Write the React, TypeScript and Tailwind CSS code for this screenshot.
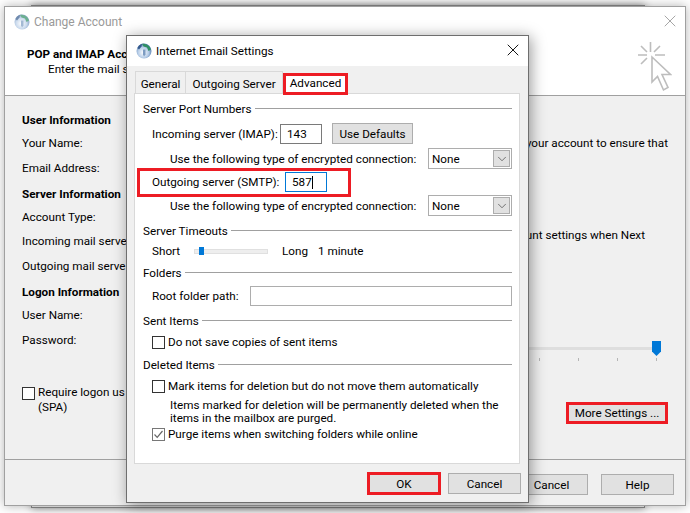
import { X, ChevronDown } from 'lucide-react';

function Globe({ className = '' }: { className?: string }) {
  return (
    <svg width="18" height="18" viewBox="0 0 18 18" className={className}>
      <defs>
        <radialGradient id="globe" cx="0.45" cy="0.6" r="0.6">
          <stop offset="0" stopColor="#ffffff" />
          <stop offset="0.6" stopColor="#b4cbe6" />
          <stop offset="1" stopColor="#4f78ad" />
        </radialGradient>
      </defs>
      <circle cx="9" cy="9" r="7.5" fill="url(#globe)" />
      <path d="M7 1.800C10.500 1 14.500 3 16 7.500L13.500 9 12 5.500 8.500 4.500z" fill="#2f9062" />
      <path d="M2.500 6C3.500 3.800 5 2.500 7 1.800L6.500 4.500 4 7.500z" fill="#35598c" />
      <path d="M8 7.500h2.500v5L9 14.500l-1-2z" fill="#7d9cc2" />
    </svg>
  );
}

function CursorMark() {
  return (
    <svg width="36" height="54" viewBox="0 0 36 54" fill="none" stroke="#bdbdbd" strokeWidth="1.6">
      <path d="M16 17V42L21.500 36.500L27.500 50L32 47.500L26 34.500H34.500Z" />
      <path d="M14.500 2V12M2 15H11M19 15H29M5 6L11 12M24 6L18 12M5 24L11 18" />
    </svg>
  );
}

function GroupHeader({ title, className }: { title: string; className: string }) {
  return (
    <div className={`flex h-4 items-center gap-[3px] ${className}`}>
      <span>{title}</span>
      <div className="mt-[-1px] h-px flex-1 bg-[#a0a0a0]" />
    </div>
  );
}

function NoneSelect() {
  return (
    <div className="ml-auto flex h-[21px] w-[84px] items-center justify-between border border-[#adadad] bg-white pl-[3px] pr-px">
      <span>None</span>
      <div className="flex h-[17px] w-[17px] items-center justify-center border border-[#adadad] bg-[#e1e1e1]">
        <ChevronDown size={14} strokeWidth={1.2} className="text-[#444]" />
      </div>
    </div>
  );
}

function Check({ checked, className = '' }: { checked?: boolean; className?: string }) {
  return (
    <div className={`flex h-[13px] w-[13px] shrink-0 items-center justify-center border border-[#333] bg-white ${className}`}>
      {checked && (
        <svg width="11" height="11" viewBox="0 0 11 11" fill="none" stroke="#666" strokeWidth="1.2">
          <path d="M1.500 5.500L4.200 8.300L9.500 2" />
        </svg>
      )}
    </div>
  );
}

function Btn({ label, className }: { label: string; className: string }) {
  return (
    <div className={`flex items-center justify-center bg-[#e1e1e1] ${className}`}>
      <span className="translate-y-px">{label}</span>
    </div>
  );
}

function InternetEmailSettings() {
  return (
    <div className="absolute left-[126px] top-[35px] flex h-[468px] w-[403px] flex-col border border-[#6e6e6e] bg-[#f0f0f0] shadow-[2px_2px_14px_rgba(0,0,0,0.4)]">
      <div className="flex h-[30px] items-center bg-white pl-[8px] pr-[5px]">
        <Globe />
        <span className="ml-[3px] translate-y-px text-[11.7px]">Internet Email Settings</span>
        <X size={20} strokeWidth={1.1} className="ml-auto mt-[-2px] text-black" />
      </div>

      <div className="relative z-10 mt-[4px] flex h-[23px] items-end pl-[8px]">
        <div className="flex h-[22px] w-[51px] items-center justify-center border border-b-0 border-[#d9d9d9] bg-[#f0f0f0] pt-[4px]">General</div>
        <div className="flex h-[22px] w-[97px] items-center justify-center border border-b-0 border-l-0 border-[#d9d9d9] bg-[#f0f0f0] pt-[4px]">Outgoing Server</div>
        <div className="mb-[-2px] flex h-[22px] w-[65px] items-center justify-center border-[3px] border-[#ed1c24] bg-white">Advanced</div>
      </div>

      <div className="ml-[7px] flex h-[371px] w-[386px] flex-col border border-[#d9d9d9] bg-white pl-[8px] pr-[7px] [&_p]:translate-y-px [&_span]:translate-y-px">
        <GroupHeader title="Server Port Numbers" className="mt-[7px]" />

        <div className="mt-[6px] flex h-[21px] items-center pl-[9px]">
          <span className="w-[128px]">Incoming server (IMAP):</span>
          <div className="flex h-[20px] w-[42px] items-center border border-[#7a7a7a] pl-[6px]">
            <span>143</span>
          </div>
          <Btn label="Use Defaults" className="ml-[10px] h-[21px] w-[81px] border border-[#adadad]" />
        </div>

        <div className="mt-[4px] flex h-[21px] items-center pl-[27px]">
          <span>Use the following type of encrypted connection:</span>
          <NoneSelect />
        </div>

        <div className="relative mt-[3px] flex h-[20px] items-center pl-[9px]">
          <span className="w-[133px]">Outgoing server (SMTP):</span>
          <div className="flex h-[20px] w-[42px] items-center border border-[#0078d7] pl-[6px]">
            <span>587</span>
            <div className="h-[13px] w-px bg-black" />
          </div>
          <div className="absolute left-[-6px] top-[-4px] h-[29px] w-[214px] border-[3px] border-[#ed1c24]" />
        </div>

        <div className="mt-[3px] flex h-[21px] items-center pl-[27px]">
          <span>Use the following type of encrypted connection:</span>
          <NoneSelect />
        </div>

        <GroupHeader title="Server Timeouts" className="mt-[7px]" />

        <div className="mt-[4px] flex h-4 items-center pl-[9px]">
          <span className="w-[42px]">Short</span>
          <div className="flex h-[5px] w-[74px] items-center border border-[#e0e0e0] bg-[#eeeeee] pl-[4px]">
            <div className="h-[8px] w-[5px] shrink-0 bg-[#0078d7]" />
          </div>
          <span className="ml-[14px]">Long</span>
          <span className="ml-[10px]">1 minute</span>
        </div>

        <GroupHeader title="Folders" className="mt-[6px]" />

        <div className="mt-[5px] flex h-[20px] items-center pl-[9px]">
          <span className="w-[98px]">Root folder path:</span>
          <div className="h-[20px] flex-1 border border-[#adadad]" />
        </div>

        <GroupHeader title="Sent Items" className="mt-[7px]" />

        <div className="mt-[5px] flex h-4 items-center pl-[9px]">
          <Check />
          <span className="ml-[3px]">Do not save copies of sent items</span>
        </div>

        <GroupHeader title="Deleted Items" className="mt-[7px]" />

        <div className="mt-[5px] flex h-4 items-center pl-[9px]">
          <Check />
          <span className="ml-[3px]">Mark items for deletion but do not move them automatically</span>
        </div>
        <p className="mt-1 pl-[27px] leading-[13px]">
          Items marked for deletion will be permanently deleted when the
          <br />
          items in the mailbox are purged.
        </p>
        <div className="mt-[2px] flex h-4 items-center pl-[9px]">
          <Check checked className="border-[#777]" />
          <span className="ml-[3px]">Purge items when switching folders while online</span>
        </div>
      </div>

      <div className="mt-[8px] flex items-center justify-end gap-[7px] pr-[7px]">
        <Btn label="OK" className="h-[23px] w-[74px] border-[3px] border-[#ed1c24]" />
        <Btn label="Cancel" className="h-[21px] w-[73px] border border-[#adadad]" />
      </div>
    </div>
  );
}

function ChangeAccount() {
  return (
    <div className="absolute left-[4px] top-[6px] flex h-[500px] w-[682px] flex-col border border-[#a0a0a0] bg-white shadow-[0_0_10px_rgba(0,0,0,0.3)]">
      <div className="flex h-[89px] flex-col border-b border-[#a0a0a0]">
        <div className="flex h-[30px] items-center pl-[8px] pr-[5px]">
          <Globe className="opacity-70" />
          <span className="ml-[3px] text-[12px] text-[#999]">Change Account</span>
          <X size={20} strokeWidth={0.9} className="ml-auto mt-[-2px] text-[#888]" />
        </div>
        <div className="flex flex-1 justify-between pl-[22px] pr-[13px]">
          <div className="pt-[10px]">
            <div className="h-[15px] leading-[15px] font-bold">POP and IMAP Acc</div>
            <div className="h-[15px] pl-[21px] leading-[15px]">Enter the mail se</div>
          </div>
          <div className="pt-[3px]">
            <CursorMark />
          </div>
        </div>
      </div>

      <div className="flex h-[364px] justify-between border-b border-[#a0a0a0] bg-[#f0f0f0]">
        <div className="flex flex-col pl-[17px] pt-[16px]">
          <div className="h-4 font-bold leading-4">User Information</div>
          <div className="mt-[7px] h-4 leading-4">Your Name:</div>
          <div className="mt-[9px] h-4 leading-4">Email Address:</div>
          <div className="mt-[10px] h-4 font-bold leading-4">Server Information</div>
          <div className="mt-[7px] h-4 leading-4">Account Type:</div>
          <div className="mt-[8px] h-4 leading-4">Incoming mail server</div>
          <div className="mt-[9px] h-4 leading-4">Outgoing mail serve</div>
          <div className="mt-[10px] h-4 font-bold leading-4">Logon Information</div>
          <div className="mt-[7px] h-4 leading-4">User Name:</div>
          <div className="mt-[9px] h-4 leading-4">Password:</div>
          <div className="mt-[38px] flex h-[14px] items-center">
            <Check />
            <span className="ml-[3px]">Require logon us</span>
          </div>
          <div className="pl-[16px] leading-[14px]">(SPA)</div>
        </div>

        <div className="flex w-[290px] flex-col items-end pr-[17px] pt-[39px]">
          <div className="h-4 leading-4">your account to ensure that</div>
          <div className="mt-[76px] h-4 pr-[23px] leading-4">unt settings when Next</div>
          <div className="mt-[98px] flex h-[15px] w-[280px] items-center pr-[7px]">
            <div className="h-[3px] flex-1 bg-[#dedede]" />
            <div className="h-[15px] w-[9px] bg-[#0078d7] [clip-path:polygon(0_0,100%_0,100%_70%,50%_100%,0_70%)]" />
          </div>
          <div className="mt-[2px] flex w-[280px] justify-end gap-[38px] pr-[11px]">
            <div className="h-[3px] w-px bg-[#b5b5b5]" />
            <div className="h-[3px] w-px bg-[#b5b5b5]" />
            <div className="h-[3px] w-px bg-[#b5b5b5]" />
            <div className="h-[3px] w-px bg-[#b5b5b5]" />
          </div>
          <Btn label="More Settings ..." className="mt-[41px] h-[22px] w-[102px] border-[3px] border-[#ed1c24]" />
        </div>
      </div>

      <div className="flex flex-1 items-start justify-end gap-[13px] bg-[#f0f0f0] pr-[11px] pt-[14px]">
        <Btn label="Cancel" className="h-[21px] w-[73px] border border-[#adadad]" />
        <Btn label="Help" className="h-[21px] w-[73px] border border-[#adadad]" />
      </div>
    </div>
  );
}

export default function App() {
  return (
    <div className="relative h-[513px] w-[690px] overflow-hidden whitespace-nowrap bg-white font-['Roboto',sans-serif] text-[11.7px] text-black">
      <div className="absolute left-[31px] top-[5px] h-[503px] w-[614px] border border-[#8a8a8a] bg-[#eeeeee] shadow-[0_0_8px_rgba(0,0,0,0.45)]" />
      <ChangeAccount />
      <InternetEmailSettings />
    </div>
  );
}
